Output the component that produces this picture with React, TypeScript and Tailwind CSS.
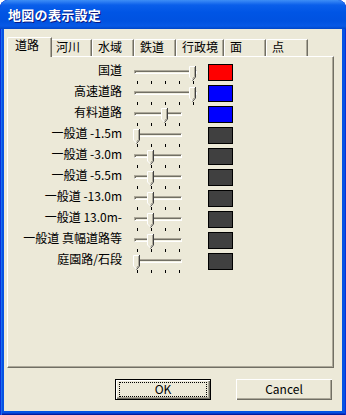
import React from "react";

type Row = { label: string; ticks: number; pos: number; color: string };

const rows: Row[] = [
  { label: "国道", ticks: 5, pos: 4, color: "#FF0000" },
  { label: "高速道路", ticks: 5, pos: 4, color: "#0000FF" },
  { label: "有料道路", ticks: 4, pos: 2, color: "#0000FF" },
  { label: "一般道 -1.5m", ticks: 4, pos: 0, color: "#404040" },
  { label: "一般道 -3.0m", ticks: 4, pos: 1, color: "#404040" },
  { label: "一般道 -5.5m", ticks: 4, pos: 1, color: "#404040" },
  { label: "一般道 -13.0m", ticks: 4, pos: 1, color: "#404040" },
  { label: "一般道 13.0m-", ticks: 4, pos: 1, color: "#404040" },
  { label: "一般道 真幅道路等", ticks: 4, pos: 1, color: "#404040" },
  { label: "庭園路/石段", ticks: 4, pos: 0, color: "#404040" },
];

const tabs = [
  { label: "河川", w: "w-[42px]" },
  { label: "水域", w: "w-[42px]" },
  { label: "鉄道", w: "w-[42px]" },
  { label: "行政境", w: "w-[48px]" },
  { label: "面", w: "w-[42px]" },
  { label: "点", w: "w-[42px]" },
];

const TICKS = [4, 18, 32, 46, 60];

function Slider({ ticks, pos }: { ticks: number; pos: number }) {
  const xs = TICKS.slice(0, ticks);
  const trackW = ticks === 5 ? 63 : 48;
  return (
    <div className="relative w-[75px] h-[21px] shrink-0">
      <div
        className="absolute left-[1px] top-[6px] h-[4px] border border-t-[#ACA899] border-l-[#ACA899] border-b-white border-r-white bg-[#F1EFE2] shadow-[inset_1px_1px_0_#716F64]"
        style={{ width: trackW }}
      />
      {xs.map((x) => (
        <div key={x} className="absolute top-[17px] w-px h-[3px] bg-black" style={{ left: x }} />
      ))}
      <svg
        width="7"
        height="15"
        viewBox="0 0 7 15"
        className="absolute top-[2px]"
        style={{ left: xs[pos] - 4 }}
      >
        <path d="M0 0H7V11L3.5 14.5L0 11Z" fill="#ECE9D8" />
        <path d="M0.5 11V0.5H6" stroke="#ffffff" fill="none" />
        <path d="M0.5 11L3.5 14" stroke="#ffffff" fill="none" />
        <path d="M6.5 0V11L3.5 14.5" stroke="#404040" fill="none" />
        <path d="M5.5 1V10.5L3.5 12.5" stroke="#ACA899" fill="none" />
      </svg>
    </div>
  );
}

export default function App() {
  return (
    <div className="w-[346px] h-[415px] bg-white font-['Noto_Sans_CJK_JP','Noto_Sans',sans-serif] text-black">
      <div className="w-[346px] h-[415px] rounded-t-[8px] bg-[#0553E3] flex flex-col overflow-hidden shadow-[inset_1px_0_0_#0831D9,inset_2px_0_0_#1C6CF0,inset_-1px_0_0_#0831D9,inset_0_-1px_0_#001EA0,inset_0_-2px_0_#0839C8]">
        <div className="h-[29px] shrink-0 rounded-t-[8px] bg-[linear-gradient(180deg,#3D8EF5_0px,#2A7BF2_2px,#0A5FEA_5px,#0055E5_12px,#0052E0_21px,#0759E6_26px,#0046C8_29px)] flex items-center pl-[8px]">
          <span className="text-white font-bold text-[13px] tracking-[0.3px] leading-[16px] [text-shadow:1px_1px_0_#0A1883]">
            地図の表示設定
          </span>
        </div>
        <div className="flex-1 ml-[4px] mr-[4px] mb-[4px] bg-[#ECE9D8] flex flex-col pt-[8px] pl-[3px]">
          {/* tabs */}
          <div className="flex items-end h-[19px] text-[12px]">
            <div className="relative z-10 h-[20px] -mb-[1px] -mr-[2px] w-[45px] bg-[#ECE9D8] border-l border-t border-white border-r border-r-[#716F64] rounded-tl-[2px] shadow-[inset_-1px_0_0_#ACA899] pl-[7px] leading-[14px]">
              道路
            </div>
            {tabs.map((t) => (
              <div
                key={t.label}
                className={`${t.w} h-[17px] shrink-0 border-l border-t border-white border-r border-r-[#716F64] rounded-tl-[2px] shadow-[inset_-1px_0_0_#ACA899] pl-[5px] leading-[14px]`}
              >
                {t.label}
              </div>
            ))}
          </div>
          {/* panel */}
          <div className="w-[327px] h-[312px] border border-t-white border-l-white border-r-[#716F64] border-b-[#716F64] shadow-[inset_-1px_-1px_0_#ACA899] pt-[7px] flex flex-col">
            {rows.map((r) => (
              <div key={r.label} className="flex items-start h-[21px] shrink-0">
                <div className="w-[114px] text-right text-[12px] leading-[14px] -mt-[1px] whitespace-nowrap">
                  {r.label}
                </div>
                <div className="ml-[11px]">
                  <Slider ticks={r.ticks} pos={r.pos} />
                </div>
                <div className="w-[25px] h-[17px] border border-black" style={{ backgroundColor: r.color }} />
              </div>
            ))}
          </div>
          {/* buttons */}
          <div className="flex mt-[11px] pl-[108px] text-[12px]">
            <button className="relative w-[96px] h-[21px] border border-black bg-[#ECE9D8] shadow-[inset_1px_1px_0_#ffffff,inset_-1px_-1px_0_#716F64,inset_-2px_-2px_0_#ACA899] flex items-center justify-center pb-[2px] leading-[14px]">
              <span className="absolute left-[3px] right-[3px] top-[2px] bottom-[2px] border border-dotted border-black" />
              OK
            </button>
            <button className="ml-[25px] w-[96px] h-[21px] bg-[#ECE9D8] shadow-[inset_1px_1px_0_#ffffff,inset_-1px_-1px_0_#716F64,inset_-2px_-2px_0_#ACA899] flex items-center justify-center pb-[2px] leading-[14px]">
              Cancel
            </button>
          </div>
        </div>
      </div>
    </div>
  );
}
